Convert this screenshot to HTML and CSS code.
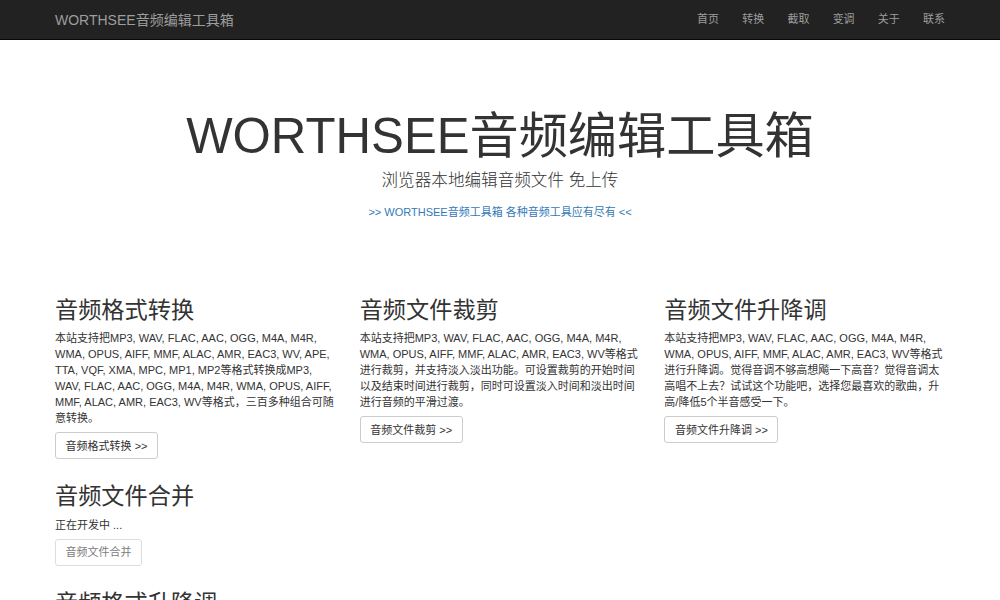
FILE: index.html
```html
<!DOCTYPE html>
<html lang="zh-CN">
<head>
<meta charset="utf-8">
<title>WORTHSEE音频编辑工具箱</title>
<link rel="stylesheet" href="styles.css">
</head>
<body>
<nav class="navbar">
  <div class="container nav-inner">
    <a class="brand" href="#">WORTHSEE音频编辑工具箱</a>
    <ul class="nav-links">
      <li><a href="#">首页</a></li>
      <li><a href="#">转换</a></li>
      <li><a href="#">截取</a></li>
      <li><a href="#">变调</a></li>
      <li><a href="#">关于</a></li>
      <li><a href="#">联系</a></li>
    </ul>
  </div>
</nav>
<header class="hero">
  <h1 class="hero-title">WORTHSEE音频编辑工具箱</h1>
  <p class="hero-sub">浏览器本地编辑音频文件 免上传</p>
  <p class="hero-link"><a href="#">&gt;&gt; WORTHSEE音频工具箱 各种音频工具应有尽有 &lt;&lt;</a></p>
</header>
<main class="container">
  <div class="row">
    <section class="feature">
      <h2>音频格式转换</h2>
      <p>本站支持把MP3, WAV, FLAC, AAC, OGG, M4A, M4R, WMA, OPUS, AIFF, MMF, ALAC, AMR, EAC3, WV, APE, TTA, VQF, XMA, MPC, MP1, MP2等格式转换成MP3, WAV, FLAC, AAC, OGG, M4A, M4R, WMA, OPUS, AIFF, MMF, ALAC, AMR, EAC3, WV等格式，三百多种组合可随意转换。</p>
      <p><a class="btn" href="#">音频格式转换 &gt;&gt;</a></p>
    </section>
    <section class="feature">
      <h2>音频文件裁剪</h2>
      <p>本站支持把MP3, WAV, FLAC, AAC, OGG, M4A, M4R, WMA, OPUS, AIFF, MMF, ALAC, AMR, EAC3, WV等格式进行裁剪，并支持淡入淡出功能。可设置裁剪的开始时间以及结束时间进行裁剪，同时可设置淡入时间和淡出时间进行音频的平滑过渡。</p>
      <p><a class="btn" href="#">音频文件裁剪 &gt;&gt;</a></p>
    </section>
    <section class="feature">
      <h2>音频文件升降调</h2>
      <p>本站支持把MP3, WAV, FLAC, AAC, OGG, M4A, M4R, WMA, OPUS, AIFF, MMF, ALAC, AMR, EAC3, WV等格式进行升降调。觉得音调不够高想飚一下高音？觉得音调太高唱不上去？试试这个功能吧，选择您最喜欢的歌曲，升高/降低5个半音感受一下。</p>
      <p><a class="btn" href="#">音频文件升降调 &gt;&gt;</a></p>
    </section>
  </div>
  <div class="row">
    <section class="feature">
      <h2>音频文件合并</h2>
      <p>正在开发中 ...</p>
      <p><a class="btn disabled" href="#">音频文件合并</a></p>
    </section>
  </div>
  <div class="row">
    <section class="feature">
      <h2>音频格式升降调</h2>
      <p>正在开发中 ...</p>
      <p><a class="btn disabled" href="#">音频格式升降调</a></p>
    </section>
  </div>
</main>
</body>
</html>
```
FILE: styles.css
```css
* { box-sizing: border-box; }
html, body { margin: 0; padding: 0; }
body {
  font-family: "Liberation Sans", "Noto Sans CJK SC", sans-serif;
  font-size: 11px;
  line-height: 16px;
  color: #333;
  background: #fff;
}
a { text-decoration: none; }
.container {
  width: 890px;
  margin: 0 auto;
}
.navbar {
  background: #222;
  border-bottom: 1px solid #080808;
  height: 40px;
}
.nav-inner {
  display: flex;
  align-items: center;
  justify-content: space-between;
  height: 39px;
}
.brand {
  color: #9d9d9d;
  font-size: 14px;
  line-height: 20px;
}
.nav-links {
  list-style: none;
  margin: 0 -11.6px 0 0;
  padding: 0;
  display: flex;
}
.nav-links a {
  display: block;
  color: #9d9d9d;
  padding: 0 11.6px;
  line-height: 39px;
}
.hero {
  text-align: center;
  padding: 68px 0 61px;
}
.hero-title {
  font-size: 49.2px;
  line-height: 55px;
  font-weight: 400;
  margin: 0;
  color: #333;
}
.hero-sub {
  font-size: 16.6px;
  line-height: 24px;
  margin: 6px 0 0;
  font-weight: 300;
}
.hero-link {
  margin: 11px 0 0;
}
.hero-link a { color: #337ab7; }
.row {
  display: grid;
  grid-template-columns: repeat(3, 1fr);
  column-gap: 24px;
}
.feature h2 {
  font-size: 23.2px;
  line-height: 26.4px;
  font-weight: 400;
  margin: 16px 0 7px;
}
.feature p {
  margin: 0 0 8px;
}
.feature p + p { margin-top: -2px; }
.btn {
  display: inline-block;
  color: #333;
  background: #fff;
  border: 1px solid #ccc;
  border-radius: 3px;
  padding: 4.5px 9.6px;
  line-height: 16px;
  font-size: 11px;
}
.btn.disabled {
  opacity: 0.65;
  color: #333;
}
```
